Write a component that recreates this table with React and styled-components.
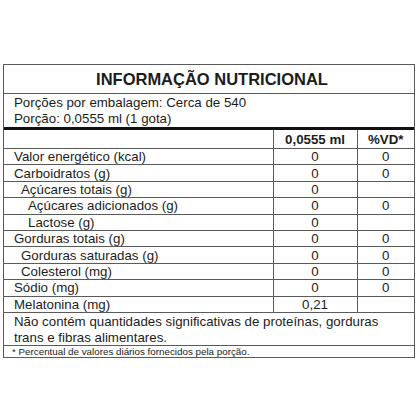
import React from "react";
import styled, { createGlobalStyle } from "styled-components";

const Global = createGlobalStyle`
  html, body { margin: 0; padding: 0; background: #fff; }
  body { font-family: "Liberation Sans", Arial, sans-serif; color: #1c1c1c; }
`;

const Page = styled.div`
  width: 420px;
  height: 420px;
  box-sizing: border-box;
  padding: 64px 5px 0 3px;
`;

const Panel = styled.div`
  border: 1px solid #5a5a5a;
  box-sizing: border-box;
  width: 412px;
`;

const Title = styled.div`
  height: 28px;
  display: flex;
  align-items: center;
  justify-content: center;
  font-weight: bold;
  font-size: 16.5px;
  padding-left: 6px;
  border-bottom: 1px solid #5a5a5a;
`;

const Info = styled.div`
  height: 33px;
  box-sizing: border-box;
  padding: 1px 0 0 10px;
  font-size: 13.3px;
  line-height: 15.5px;
`;

const Table = styled.table`
  width: 100%;
  border-collapse: collapse;
  table-layout: fixed;
  font-size: 13.3px;
`;

const HeadRow = styled.tr`
  height: 20px;
`;

const Row = styled.tr`
  height: 16.4px;
`;

const Cell = styled.td`
  border-top: ${(p) => (p.$head ? "3px solid #111" : "1px solid #5a5a5a")};
  border-left: ${(p) => (p.$first ? "none" : "1px solid #5a5a5a")};
  padding: 0 0 0 ${(p) => (p.$first ? 10 + (p.$level || 0) * 7 : 0)}px;
  text-align: ${(p) => (p.$first ? "left" : "center")};
  font-weight: ${(p) => (p.$head ? "bold" : "normal")};
  line-height: 15px;
  white-space: nowrap;
  vertical-align: middle;
`;

const Note = styled.div`
  border-top: 1px solid #5a5a5a;
  height: 33px;
  box-sizing: border-box;
  padding: 1px 30px 0 10px;
  font-size: 13.3px;
  line-height: 15.5px;
`;

const Foot = styled.div`
  border-top: 1px solid #5a5a5a;
  height: 12px;
  box-sizing: border-box;
  padding-left: 8px;
  font-size: 9.8px;
  line-height: 11px;
`;

const rows = [
  ["Valor energético (kcal)", 0, "0", "0"],
  ["Carboidratos (g)", 0, "0", "0"],
  ["Açúcares totais (g)", 1, "0", ""],
  ["Açúcares adicionados (g)", 2, "0", "0"],
  ["Lactose (g)", 2, "0", ""],
  ["Gorduras totais (g)", 0, "0", "0"],
  ["Gorduras saturadas (g)", 1, "0", "0"],
  ["Colesterol (mg)", 1, "0", "0"],
  ["Sódio (mg)", 0, "0", "0"],
  ["Melatonina (mg)", 0, "0,21", ""],
];

export default function App() {
  return (
    <>
      <Global />
      <Page>
        <Panel>
          <Title>INFORMAÇÃO NUTRICIONAL</Title>
          <Info>
            Porções por embalagem: Cerca de 540
            <br />
            Porção: 0,0555 ml (1 gota)
          </Info>
          <Table>
            <colgroup>
              <col style={{ width: 269 }} />
              <col style={{ width: 84 }} />
              <col />
            </colgroup>
            <tbody>
              <HeadRow>
                <Cell $first $head />
                <Cell $head>0,0555 ml</Cell>
                <Cell $head>%VD*</Cell>
              </HeadRow>
              {rows.map(([label, level, v, vd]) => (
                <Row key={label}>
                  <Cell $first $level={level}>{label}</Cell>
                  <Cell>{v}</Cell>
                  <Cell>{vd}</Cell>
                </Row>
              ))}
            </tbody>
          </Table>
          <Note>
            Não contém quantidades significativas de proteínas, gorduras trans e
            fibras alimentares.
          </Note>
          <Foot>* Percentual de valores diários fornecidos pela porção.</Foot>
        </Panel>
      </Page>
    </>
  );
}
